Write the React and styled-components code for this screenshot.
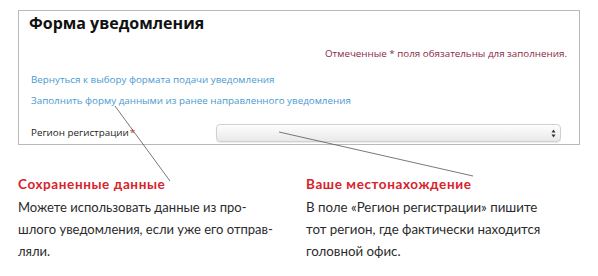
import React from 'react';
import styled, { createGlobalStyle } from 'styled-components';

const GlobalStyle = createGlobalStyle`
  html, body {
    margin: 0;
    padding: 0;
    background: #fff;
  }
`;

const Page = styled.div`
  position: relative;
  width: 598px;
  height: 276px;
  padding: 10px 0 0 18px;
  box-sizing: border-box;
  overflow: hidden;
`;

// Рамка формы
const FormBox = styled.div`
  width: 562px;
  height: 135px;
  box-sizing: border-box;
  border: 1px solid #b9b9b9;
  padding: 0 12px 0 12px;
  font-family: "Open Sans", "Noto Sans", sans-serif;
  display: flex;
  flex-direction: column;
`;

const Title = styled.h2`
  margin: 0 0 0 -2px;
  padding-top: 1px;
  font-size: 16px;
  font-weight: 700;
  color: #111;
  line-height: 22px;
`;

const Note = styled.div`
  margin-top: 13px;
  text-align: right;
  font-size: 9.8px;
  color: #8a2846;
  line-height: 14px;
`;

const Link = styled.a`
  display: block;
  font-size: 9.8px;
  line-height: 14px;
  color: #4a9ad0;
  text-decoration: none;
  margin-top: ${p => p.$gap}px;
`;

const FieldRow = styled.div`
  display: flex;
  align-items: center;
  margin-top: 16px;
`;

const Label = styled.label`
  width: 185px;
  font-size: 9.8px;
  color: #222;
  line-height: 14px;
`;

const Star = styled.span`
  color: #e02020;
  margin-left: 1px;
`;

const Select = styled.div`
  flex: 0 0 345px;
  height: 18px;
  box-sizing: border-box;
  border: 1px solid #d0d0d0;
  border-radius: 4px;
  background: linear-gradient(#fdfdfd, #e9e9e9);
  box-shadow: inset 0 1px 0 #fff, 0 1px 1px rgba(0, 0, 0, 0.08);
  display: flex;
  align-items: center;
  justify-content: flex-end;
  padding-right: 4px;
`;

const Columns = styled.div`
  display: grid;
  grid-template-columns: 288px 274px;
  margin-top: 30px;
  font-family: "Lato", "Noto Sans", sans-serif;
`;

const Column = styled.div``;

const Heading = styled.div`
  font-size: 13.5px;
  font-weight: 700;
  color: #d8222c;
  letter-spacing: 0.6px;
  line-height: 18px;
`;

const Body = styled.p`
  margin: 3px 0 0;
  font-size: ${p => (p.$wide ? 13.3 : 13)}px;
  line-height: 22px;
  color: #2b2b2b;
`;

const Callouts = styled.svg`
  position: absolute;
  left: 0;
  top: 0;
  pointer-events: none;
`;

const Arrows = () => (
  <svg width="5" height="9" viewBox="0 0 5 9">
    <path d="M2.5 0.5 L4.5 3.5 H0.5 Z M2.5 8.5 L4.5 5.5 H0.5 Z" fill="#333" />
  </svg>
);

export default function App() {
  return (
    <>
      <GlobalStyle />
      <Page>
        <FormBox>
          <Title>Форма уведомления</Title>
          <Note>Отмеченные * поля обязательны для заполнения.</Note>
          <Link href="#" $gap={12}>Вернуться к выбору формата подачи уведомления</Link>
          <Link href="#" $gap={7}>Заполнить форму данными из ранее направленного уведомления</Link>
          <FieldRow>
            <Label>Регион регистрации<Star>*</Star></Label>
            <Select><Arrows /></Select>
          </FieldRow>
        </FormBox>
        <Columns>
          <Column>
            <Heading>Сохраненные данные</Heading>
            <Body>
              Можете использовать данные из про-<br />
              шлого уведомления, если уже его отправ-<br />
              ляли.
            </Body>
          </Column>
          <Column>
            <Heading>Ваше местонахождение</Heading>
            <Body $wide>
              В поле «Регион регистрации» пишите<br />
              тот регион, где фактически находится<br />
              головной офис.
            </Body>
          </Column>
        </Columns>
        <Callouts width="598" height="276">
          <line x1="115" y1="106" x2="170" y2="181" stroke="#555" strokeWidth="0.8" />
          <line x1="279" y1="132" x2="473" y2="176" stroke="#555" strokeWidth="0.8" />
        </Callouts>
      </Page>
    </>
  );
}
